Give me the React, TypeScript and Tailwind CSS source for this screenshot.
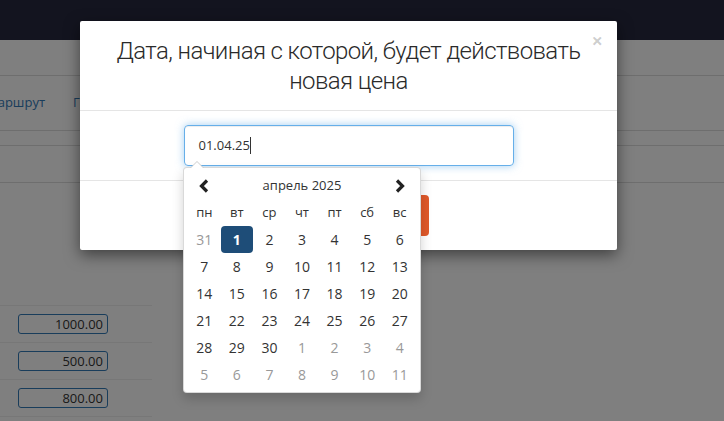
const weekDays = ["пн", "вт", "ср", "чт", "пт", "сб", "вс"];

type Day = { n: number; muted?: boolean; active?: boolean };

function buildMonth(): Day[][] {
  const days: Day[] = [{ n: 31, muted: true }];
  for (let i = 1; i <= 30; i++) days.push({ n: i, active: i === 1 });
  for (let i = 1; i <= 11; i++) days.push({ n: i, muted: true });
  const weeks: Day[][] = [];
  for (let i = 0; i < 42; i += 7) weeks.push(days.slice(i, i + 7));
  return weeks;
}

function Chevron({ dir }: { dir: "left" | "right" }) {
  return (
    <svg width="12" height="14" viewBox="0 0 12 14" className={dir === "left" ? "" : "rotate-180"}>
      <path d="M9 1.5 L3.5 7 L9 12.5" fill="none" stroke="#222" strokeWidth="3.2" strokeLinejoin="miter" />
    </svg>
  );
}

function Datepicker() {
  const weeks = buildMonth();
  return (
    <div className="absolute left-[103px] top-[146px] w-[238px] p-[4px] bg-white rounded-[4px] border border-black/15 shadow-[0_6px_12px_rgba(0,0,0,0.175)] text-[14px] text-[#333]">
      {/* notch pointing to the input */}
      <div className="absolute -top-[7px] left-[6px] w-0 h-0 border-l-[7px] border-r-[7px] border-b-[7px] border-l-transparent border-r-transparent border-b-[#ccc]" />
      <div className="absolute -top-[6px] left-[7px] w-0 h-0 border-l-[6px] border-r-[6px] border-b-[6px] border-l-transparent border-r-transparent border-b-white" />
      <div className="grid grid-cols-7">
        <div className="h-[27px] flex items-center justify-center">
          <Chevron dir="left" />
        </div>
        <div className="col-span-5 h-[27px] flex items-center justify-center text-[13px]">апрель 2025</div>
        <div className="h-[27px] flex items-center justify-center">
          <Chevron dir="right" />
        </div>
        {weekDays.map((d) => (
          <div key={d} className="h-[27px] flex items-center justify-center text-[13px]">
            {d}
          </div>
        ))}
        {weeks.flat().map((d, i) => (
          <div
            key={i}
            className={
              "h-[27px] flex items-center justify-center rounded-[4px] " +
              (d.active ? "bg-[#1e4d78] text-white font-bold" : d.muted ? "text-[#999]" : "")
            }
          >
            {d.n}
          </div>
        ))}
      </div>
    </div>
  );
}

export default function App() {
  const prices = ["1000.00", "500.00", "800.00"];
  return (
    <div className="relative w-[724px] h-[421px] overflow-hidden bg-white font-['Open_Sans',sans-serif]">
      {/* page behind the dialog */}
      <div className="h-[40px] bg-[#26283e]" />
      <div className="h-[36px] border-b border-[#ddd]" />
      <div className="h-[55px] border-b border-[#ddd] flex items-center gap-[28px] -ml-[14px] text-[13px] text-[#337ab7]">
        <span>Маршрут</span>
        <span>Гарантии</span>
      </div>
      <div className="h-[15px] border-b border-[#ddd]" />
      <div className="h-[37px] border-b border-[#ddd]" />
      <div className="h-[122px]" />
      <div className="w-[152px] border-t border-[#eee]">
        {prices.map((p) => (
          <div key={p} className="h-[37px] border-b border-[#eee] flex items-center pl-[18px]">
            <div className="w-[90px] h-[20px] rounded-[3px] border border-[#337ab7] text-right pr-[4px] text-[13px] leading-[18px] text-[#333]">
              {p}
            </div>
          </div>
        ))}
      </div>

      {/* backdrop */}
      <div className="absolute inset-0 bg-black/50" />

      {/* dialog */}
      <div className="absolute left-[80px] top-[21px] w-[537px] bg-white rounded-[2px] shadow-[0_5px_15px_rgba(0,0,0,0.5)]">
        <div className="relative px-[15px] pt-[15px] pb-[14px] border-b border-[#e5e5e5]">
          <span className="absolute right-[14px] top-[10px] text-[20px] font-bold text-black/20 leading-none">×</span>
          <h4 className="text-center text-[24px] leading-[30px] text-[#2a2a2a] font-['Roboto',sans-serif] font-light tracking-[-0.6px] px-[10px]">
            Дата, начиная с которой, будет действовать новая цена
          </h4>
        </div>
        <div className="py-[14px] flex justify-center">
          <div className="w-[330px] h-[41px] rounded-[4px] border border-[#66afe9] shadow-[inset_0_1px_1px_rgba(0,0,0,0.075),0_0_8px_rgba(102,175,233,0.6)] flex items-center px-[14px] text-[13px] text-[#333]">
            01.04.25<span className="w-px h-[17px] bg-[#333]" />
          </div>
        </div>
        <div className="border-t border-[#e5e5e5] pt-[14px] pb-[14px] flex justify-center">
          <button className="w-[161px] h-[41px] rounded-[4px] bg-[#e0592a] text-white text-[14px]">Сохранить</button>
        </div>
        <Datepicker />
      </div>
    </div>
  );
}
